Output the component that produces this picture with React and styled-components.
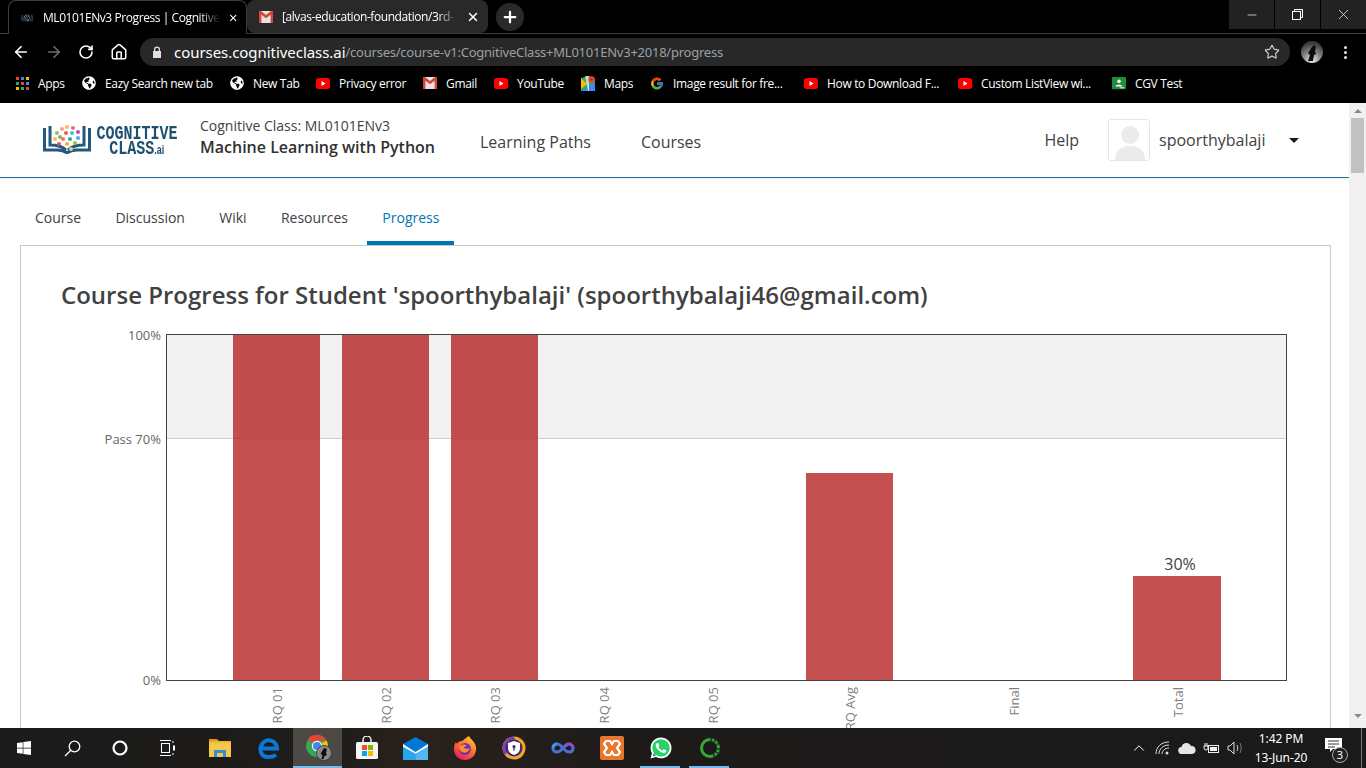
import styled, { createGlobalStyle } from "styled-components";
import { ArrowLeft, ArrowRight, RotateCw, Home, Star, X, Plus, Minus, ChevronUp } from "lucide-react";
import { FaWindows, FaWhatsapp, FaGlobeAmericas } from "react-icons/fa";
import { FcGoogle } from "react-icons/fc";

const GlobalStyle = createGlobalStyle`
  html, body { margin: 0; padding: 0; overflow: hidden; background: #fff; }
  * { box-sizing: border-box; }
`;

const Screen = styled.div`
  width: 1366px;
  height: 768px;
  display: flex;
  flex-direction: column;
  overflow: hidden;
  font-family: "Open Sans", "Noto Sans", sans-serif;
`;

/* browser chrome */
const Browser = styled.div`
  height: 103px;
  flex: none;
  background: #000;
  color: #fff;
`;

const TabStrip = styled.div`
  height: 34px;
  display: flex;
  padding-left: 8px;
  border-bottom: 1px solid #3c3c3c;
`;

const BrowserTab = styled.div`
  width: ${(p) => p.$w}px;
  height: ${(p) => (p.$active ? 34 : 33)}px;
  display: flex;
  align-items: center;
  padding: 0 8px 0 12px;
  gap: 8px;
  font-size: 12px;
  letter-spacing: -0.42px;
  background: ${(p) => (p.$active ? "#000" : "#292929")};
  border-radius: 8px 8px ${(p) => (p.$active ? "0 0" : "8px 8px")};
  border: ${(p) => (p.$active ? "1px solid #3c3c3c" : "none")};
  border-bottom: none;
  position: relative;
  z-index: ${(p) => (p.$active ? 1 : 0)};
`;

const TabTitle = styled.span`
  flex: 1;
  white-space: nowrap;
  margin-left: ${(p) => p.$ml || 0}px;
  -webkit-mask-image: linear-gradient(to right, #000 88%, transparent 100%);
  mask-image: linear-gradient(to right, #000 88%, transparent 100%);
`;

const NewTab = styled.div`
  width: 28px;
  height: 28px;
  margin: 3px 0 0 8px;
  border-radius: 50%;
  background: #292929;
  display: flex;
  align-items: center;
  justify-content: center;
`;

const WindowControls = styled.div`
  margin-left: auto;
  display: flex;
  gap: 1px;
  height: 29px;
`;

const WindowButton = styled.div`
  width: 45px;
  background: #222;
  display: flex;
  align-items: center;
  justify-content: center;
`;

const Toolbar = styled.div`
  height: 36px;
  display: flex;
  align-items: center;
  padding-left: 5px;
`;

const ToolButton = styled.div`
  width: 32.5px;
  display: flex;
  justify-content: center;
  color: ${(p) => (p.$off ? "#6e6e6e" : "#fff")};
`;

const AddressBar = styled.div`
  width: 1150px;
  height: 28px;
  margin-left: 5px;
  padding: 0 10px 0 12px;
  background: #282828;
  border-radius: 14px;
  display: flex;
  align-items: center;
  font-family: "Noto Sans", sans-serif;
`;

const Host = styled.span`
  margin-left: 12px;
  font-size: 15px;
  letter-spacing: -0.05px;
  color: #fff;
`;

const UrlPath = styled.span`
  font-size: 13px;
  letter-spacing: -0.24px;
  color: #9aa0a6;
`;

const StarSlot = styled.div`
  margin-left: auto;
  display: flex;
  color: #c8c8c8;
`;

const Profile = styled.div`
  margin-left: 11px;
  width: 22px;
  height: 22px;
  border-radius: 50%;
  overflow: hidden;
`;

const Kebab = styled.div`
  margin-left: 21px;
  display: flex;
  flex-direction: column;
  gap: 2px;
  span {
    width: 3px;
    height: 3px;
    border-radius: 50%;
    background: #e6e6e6;
  }
`;

const Bookmarks = styled.div`
  height: 33px;
  display: flex;
  align-items: center;
  padding: 0 0 7px 15px;
`;

const Bookmark = styled.div`
  width: ${(p) => p.$w}px;
  flex: none;
  display: flex;
  align-items: center;
  gap: 9px;
  font-size: 12px;
  letter-spacing: -0.33px;
  white-space: nowrap;
`;

const FavSlot = styled.span`
  width: 14px;
  height: 14px;
  flex: none;
  display: flex;
  align-items: center;
  justify-content: center;
`;

/* page */
const Viewport = styled.div`
  flex: 1;
  min-height: 0;
  display: flex;
`;

const Page = styled.div`
  flex: 1;
  min-width: 0;
  overflow: hidden;
  background: #fff;
`;

const Scrollbar = styled.div`
  width: 17px;
  flex: none;
  background: #f1f1f1;
  display: flex;
  flex-direction: column;
  align-items: center;
  padding: 6px 2px;
`;

const ScrollThumb = styled.div`
  width: 13px;
  height: 55px;
  margin-top: 5px;
  background: #c1c1c1;
`;

const ScrollArrow = styled.div`
  width: 0;
  height: 0;
  border-left: 4px solid transparent;
  border-right: 4px solid transparent;
  border-${(p) => (p.$down ? "top" : "bottom")}: 4px solid #8a8a8a;
  margin-top: ${(p) => (p.$down ? "auto" : "0")};
  margin-bottom: ${(p) => (p.$down ? "4px" : "0")};
`;

const Header = styled.header`
  height: 75px;
  display: flex;
  align-items: center;
  padding: 0 50px 0 43px;
  border-bottom: 1px solid #1a6f9e;
  box-shadow: 0 1px 4px rgba(0, 0, 0, 0.08);
`;

const Logo = styled.div`
  width: 157px;
  flex: none;
  display: flex;
  align-items: center;
  gap: 5px;
  margin-top: -2px;
`;

const LogoWords = styled.div`
  width: 82px;
  margin-top: 5px;
  display: flex;
  flex-direction: column;
  align-items: center;
  font-family: "Liberation Mono", monospace;
  font-weight: 700;
  color: #1d4f70;
  line-height: 15px;
`;

const LogoLine = styled.div`
  font-size: 20px;
  white-space: nowrap;
  transform: scaleX(0.75);
`;

const LogoAi = styled.span`
  font-family: "Liberation Sans", sans-serif;
  font-size: 12px;
`;

const CourseTitle = styled.div`
  width: 280px;
  flex: none;
  margin-top: -6px;
  color: #313131;
`;

const CourseOrg = styled.div`
  font-size: 14px;
  line-height: 20px;
  color: #414141;
`;

const CourseName = styled.div`
  font-size: 16px;
  line-height: 22px;
  font-weight: 600;
`;

const HeaderLink = styled.a`
  font-size: 16px;
  color: #414141;
  margin-top: ${(p) => (p.$push ? 0 : 3)}px;
  margin-right: ${(p) => p.$mr || 0}px;
  margin-left: ${(p) => (p.$push ? "auto" : "0")};
`;

const AvatarBox = styled.div`
  width: 42px;
  height: 42px;
  flex: none;
  border: 1px solid #e6e6e6;
  border-radius: 3px;
  overflow: hidden;
`;

const UserName = styled.span`
  font-size: 16px;
  color: #414141;
  margin-left: 9px;
`;

const Caret = styled.span`
  margin-left: auto;
  width: 0;
  height: 0;
  border-left: 5px solid transparent;
  border-right: 5px solid transparent;
  border-top: 5px solid #1b1b1b;
`;

const UserMenu = styled.div`
  width: 191px;
  flex: none;
  display: flex;
  align-items: center;
`;

const CourseNav = styled.nav`
  height: 67px;
  padding: 17px 0 0 20px;
  display: flex;
  gap: 4.3px;
`;

const NavTab = styled.a`
  height: 50px;
  padding: 0 15px 2px;
  display: flex;
  align-items: center;
  font-size: 14px;
  color: ${(p) => (p.$active ? "#0075b4" : "#414141")};
  border-bottom: 4px solid ${(p) => (p.$active ? "#0075b4" : "transparent")};
`;

const Panel = styled.section`
  width: 1311px;
  height: 600px;
  margin-left: 20px;
  padding-top: 33px;
  border: 1px solid #c8c8c8;
`;

const PanelTitle = styled.h1`
  margin: 0 0 9px 40px;
  font-size: 24px;
  line-height: 32px;
  font-weight: 600;
  color: #414141;
  white-space: nowrap;
`;

const ChartSvg = styled.svg`
  display: block;
  font-family: "Open Sans", sans-serif;
`;

/* taskbar */
const Taskbar = styled.div`
  height: 40px;
  flex: none;
  display: flex;
  align-items: stretch;
  background: linear-gradient(to right, #1b1b1b 0%, #1e1c1a 25%, #2a231d 30%, #1d1b1a 45%, #1a1a1a 100%);
  color: #fff;
`;

const Slot = styled.div`
  width: ${(p) => p.$w || 49}px;
  flex: none;
  display: flex;
  align-items: center;
  justify-content: center;
  position: relative;
  background: ${(p) => (p.$active ? "#4c4945" : "transparent")};
  &::after {
    content: "";
    display: ${(p) => (p.$active || p.$running ? "block" : "none")};
    position: absolute;
    bottom: 0;
    left: ${(p) => (p.$running ? 4 : 0)}px;
    right: ${(p) => (p.$running ? 5 : 0)}px;
    height: 2px;
    background: #76b9ed;
  }
`;

const SlotGap = styled.div`
  width: ${(p) => p.$w}px;
  flex: none;
`;

const WhatsappBadge = styled.div`
  width: 24px;
  height: 24px;
  display: flex;
  background: radial-gradient(circle at center, #25d366 0, #25d366 9.5px, transparent 10px);
  color: #fff;
`;

const Tray = styled.div`
  margin-left: auto;
  display: flex;
  align-items: center;
  height: 100%;
`;

const TrayIcon = styled.div`
  width: 24px;
  display: flex;
  justify-content: center;
`;

const Clock = styled.div`
  width: 68px;
  text-align: center;
  font-family: "Noto Sans", sans-serif;
  font-size: 12px;
  line-height: 19px;
  letter-spacing: -0.1px;
`;

const Notify = styled.div`
  width: 46px;
  height: 100%;
  position: relative;
  display: flex;
  align-items: center;
  padding: 0 0 6px 10px;
`;

const NotifyBadge = styled.span`
  position: absolute;
  left: 17px;
  top: 19px;
  width: 16px;
  height: 16px;
  border-radius: 50%;
  background: #222;
  border: 1px solid #aaa;
  font-family: "Noto Sans", sans-serif;
  font-size: 11px;
  line-height: 14px;
  text-align: center;
`;

const ShowDesktop = styled.div`
  width: 1px;
  height: 100%;
  margin-right: 4px;
  background: #777;
`;

const logoDots = [
  [14, 9, "#8bc34a"], [19, 5, "#ef9a9a"], [24, 3, "#ffb74d"], [30, 4, "#f06292"], [35, 8, "#ab47bc"],
  [17, 13, "#66bb6a"], [23, 9, "#ef5350"], [29, 9, "#26c6da"], [35, 14, "#42a5f5"],
  [12, 15, "#ffb74d"], [20, 15, "#ff7043"], [27, 15, "#26a69a"], [32, 19, "#8bc34a"],
  [16, 20, "#ec407a"], [24, 20, "#ffa726"], [28, 25, "#ffcc80"],
];

const BookIcon = ({ size = 16 }) => (
  <svg width={size} height={size * 0.625} viewBox="0 0 48 30" fill="none" stroke="#22597d">
    <path d="M1.500 4v22h13c4 0 7 1 9.500 3 2.500-2 5.500-3 9.500-3h13V4" strokeWidth="3" />
    <path d="M7 2v19c6 0 12 1 16 5M41 2v19c-6 0-12 1-16 5" strokeWidth="3" />
    {logoDots.map(([cx, cy, fill]) => (
      <rect key={`${cx}-${cy}`} x={cx - 1.8} y={cy - 1.8} width="3.600" height="3.600" rx="1" fill={fill} stroke="none" />
    ))}
  </svg>
);

const GmailIcon = () => (
  <svg width="14" height="12" viewBox="0 0 14 12">
    <rect width="14" height="12" fill="#e8e3e3" />
    <path d="M0 0h2l5 4 5-4h2v12h-2.400V3.800L7 7.200 2.400 3.800V12H0z" fill="#d44638" />
  </svg>
);

const YoutubeIcon = () => (
  <svg width="14" height="11" viewBox="0 0 14 11">
    <rect width="14" height="11" rx="2.500" fill="#f00" />
    <path d="M5.500 3l4 2.500-4 2.500z" fill="#fff" />
  </svg>
);

const AppsIcon = () => {
  const colors = ["#ea4335", "#4285f4", "#fbbc05", "#34a853", "#ea4335", "#4285f4", "#fbbc05", "#34a853", "#ea4335"];
  return (
    <svg width="13" height="13" viewBox="0 0 13 13">
      {colors.map((c, i) => (
        <rect key={i} x={(i % 3) * 5} y={Math.floor(i / 3) * 5} width="3" height="3" fill={c} />
      ))}
    </svg>
  );
};

const MapsIcon = () => (
  <svg width="14" height="15" viewBox="0 0 14 15">
    <path d="M0 2l8-2 6 3v12H0z" fill="#34a853" />
    <path d="M0 15l14-9v9z" fill="#4285f4" />
    <path d="M0 2l6 6-6 5z" fill="#fbbc05" />
    <path d="M4 0h4v15H7z" fill="#e8eaed" opacity="0.8" />
    <circle cx="10.500" cy="3.500" r="3.200" fill="#ea4335" />
    <circle cx="10.500" cy="3.500" r="1.100" fill="#8f2a20" />
  </svg>
);

const ClassroomIcon = () => (
  <svg width="16" height="14" viewBox="0 0 16 14">
    <rect width="16" height="14" rx="1" fill="#1e8e3e" />
    <circle cx="8" cy="5" r="2" fill="#fff" />
    <path d="M4 11c0-2.500 8-2.500 8 0z" fill="#fff" />
    <rect x="9" y="12" width="5" height="1" fill="#fff" />
  </svg>
);

const ChromeIcon = () => (
  <svg width="29" height="26" viewBox="-3 0 29 26">
    <circle cx="11" cy="11" r="11" fill="#34a853" />
    <path d="M11 0a11 11 0 0 1 9.500 5.500H11a5.500 5.500 0 0 0-5 3.200L2 3.500A11 11 0 0 1 11 0z" fill="#ea4335" />
    <path d="M20.500 5.500A11 11 0 0 1 11 22l4.500-7.800A5.500 5.500 0 0 0 15.600 8z" fill="#fbbc05" />
    <circle cx="11" cy="11" r="5.200" fill="#fff" />
    <circle cx="11" cy="11" r="4.100" fill="#4285f4" />
    <circle cx="18" cy="18" r="7.500" fill="#8a8a8a" />
    <circle cx="18" cy="18" r="7.500" fill="none" stroke="#333" strokeWidth="0.800" />
    <path d="M15.500 24l1-4-2-1 3.500-6 3 1-1 4 1 2-2.500 1-1 3z" fill="#0c0c0c" />
  </svg>
);

const EdgeIcon = () => (
  <svg width="22" height="22" viewBox="0 0 22 22" fill="none" stroke="#0a78d7">
    <path d="M4 11.500h15a8 8 0 0 0-15.500-3" strokeWidth="4" />
    <path d="M3.500 8C1 13 3 20 10 20c3 0 6-.8 8-2.200" strokeWidth="4" />
  </svg>
);

const ProfileImage = () => (
  <svg width="22" height="22" viewBox="0 0 22 22">
    <defs>
      <radialGradient id="prof" cx="0.5" cy="0.9" r="0.8">
        <stop offset="0" stopColor="#f0f0f0" />
        <stop offset="0.5" stopColor="#8a8a8a" />
        <stop offset="1" stopColor="#3a3a3a" />
      </radialGradient>
    </defs>
    <rect width="22" height="22" fill="url(#prof)" />
    <path d="M7 20l2-6-2-2 4-6 2-2 2 2-1 4 1 3-2 1-1 6z" fill="#0c0c0c" />
  </svg>
);

const AvatarImage = () => (
  <svg width="40" height="40" viewBox="0 0 40 40">
    <rect width="40" height="40" fill="#fff" />
    <circle cx="21" cy="15" r="9" fill="#ebebeb" />
    <path d="M6 40c0-10 7-14 15-14s15 4 15 14z" fill="#ebebeb" />
  </svg>
);

const ExplorerIcon = () => (
  <svg width="22" height="18" viewBox="0 0 22 18">
    <path d="M0 0h8l2 2h-10z" fill="#d99a1c" />
    <rect y="2" width="22" height="16" fill="#f6c945" />
    <rect y="2" width="22" height="2" fill="#e8b93a" />
    <path d="M5 18v-7h12v7h-3v-4H8v4z" fill="#2f8fd8" />
  </svg>
);

const StoreIcon = () => (
  <svg width="24" height="24" viewBox="0 0 24 24">
    <path d="M8 7V4a4 4 0 0 1 8 0v3" fill="none" stroke="#eee" strokeWidth="1.500" />
    <rect x="1" y="6" width="22" height="17" rx="1.500" fill="#f5f5f5" />
    <rect x="7" y="9" width="5" height="5" fill="#f25022" />
    <rect x="13" y="9" width="5" height="5" fill="#7fba00" />
    <rect x="7" y="15" width="5" height="5" fill="#00a4ef" />
    <rect x="13" y="15" width="5" height="5" fill="#ffb900" />
  </svg>
);

const MailIcon = () => (
  <svg width="25" height="23" viewBox="0 0 25 23">
    <path d="M12.500 0L25 7v16H0V7z" fill="#0078d4" />
    <path d="M0 7l12.500 8L25 7v3L12.500 17 0 10z" fill="#f2f9ff" />
    <path d="M0 10l12.500 7v6H0z" fill="#28a8ea" />
    <path d="M25 10l-12.500 7v6H25z" fill="#50b8f0" />
  </svg>
);

const FirefoxIcon = () => (
  <svg width="24" height="24" viewBox="0 0 24 24">
    <defs>
      <linearGradient id="fx" x1="0.800" y1="0" x2="0.200" y2="1">
        <stop offset="0" stopColor="#ffcb30" />
        <stop offset="0.500" stopColor="#ff6a2b" />
        <stop offset="1" stopColor="#e3176d" />
      </linearGradient>
    </defs>
    <path d="M16 0c1 3 6 5 7 11 1 7-4 13-11 13S0 18 1 11c.3-2 1-4 2-5l1 2c1-2 3-3 5-3 1 0 3-3 7-5z" fill="url(#fx)" />
    <circle cx="12" cy="13" r="6" fill="#6b2fb3" />
    <path d="M6 11c2-3 6-3 8-1-2 0-3 1-3 2 2 1 5 1 6 0-1 4-5 6-8 4-2-1-3-3-3-5z" fill="#ff8a2b" />
  </svg>
);

const AvastIcon = () => (
  <svg width="24" height="24" viewBox="0 0 24 24">
    <circle cx="12" cy="12" r="11.500" fill="#f5a623" />
    <path d="M12 .5A11.500 11.500 0 0 0 3 19L14 6z" fill="#7b3fb5" />
    <circle cx="12" cy="12" r="8.500" fill="#3e2a78" />
    <path d="M12 5l6 2v5c0 4-3 6-6 7-3-1-6-3-6-7V7z" fill="#fff" />
    <circle cx="12" cy="10.500" r="1.500" fill="#3e2a78" />
    <rect x="11.300" y="11" width="1.400" height="3.500" fill="#3e2a78" />
  </svg>
);

const InfinityIcon = () => (
  <svg width="24" height="12" viewBox="0 0 24 12">
    <path d="M6 2c3 0 4 2 6 4s3 4 6 4 4-2 4-4-2-4-4-4-4 2-6 4-3 4-6 4-4-2-4-4 1-4 4-4z" fill="none" stroke="#4a6fd8" strokeWidth="3" />
    <path d="M14 4c1-1 2-2 4-2s4 2 4 4" fill="none" stroke="#8a4fc7" strokeWidth="3" />
    <path d="M2 6c0-2 2-4 4-4" fill="none" stroke="#2ea3dd" strokeWidth="3" />
  </svg>
);

const XamppIcon = () => (
  <svg width="24" height="24" viewBox="0 0 24 24">
    <rect width="24" height="24" rx="2" fill="#e8762c" />
    <path d="M6 5h4l2 3 2-3h4l2 3-3 4 3 4-2 3h-4l-2-3-2 3H6l-2-3 3-4-3-4z" fill="none" stroke="#fff" strokeWidth="2.200" />
  </svg>
);

const SpinnerIcon = () => (
  <svg width="22" height="22" viewBox="0 0 22 22">
    <circle cx="11" cy="11" r="8.500" fill="none" stroke="#3fa535" strokeWidth="3" />
    <circle cx="11" cy="11" r="8.500" fill="none" stroke="#0f4a2a" strokeWidth="3" strokeDasharray="2 2 2 2 2 30" />
  </svg>
);

const WifiIcon = () => (
  <svg width="16" height="14" viewBox="0 0 16 14" fill="none" stroke="#ddd" strokeWidth="1">
    <path d="M1 13C1 6 6 1 14 1M4 13C4 8 8 4 14 4M7 13c0-3 3-6 7-6" />
    <circle cx="12" cy="12" r="1.500" fill="#ddd" stroke="none" />
  </svg>
);

const CloudIcon = () => (
  <svg width="18" height="11" viewBox="0 0 18 11">
    <path d="M4 11a3.500 3.500 0 0 1-.5-7A5 5 0 0 1 13 3a4 4 0 0 1 1 8z" fill="#e6e6e6" />
  </svg>
);

const BatteryIcon = () => (
  <svg width="17" height="12" viewBox="0 0 17 12" fill="none" stroke="#eee">
    <rect x="5.500" y="3.500" width="10" height="7" />
    <rect x="7" y="5" width="7" height="4" fill="#eee" stroke="none" />
    <path d="M1 4h4v2a2 2 0 0 1-4 0zM2 1v3M4 1v3" />
  </svg>
);

const SpeakerIcon = () => (
  <svg width="17" height="14" viewBox="0 0 17 14" fill="none" stroke="#ddd">
    <path d="M1 5h2l4-4v12l-4-4H1z" />
    <path d="M10 4c1 2 1 4 0 6" />
    <path d="M13 2c1.500 3 1.500 7 0 10" stroke="#777" />
  </svg>
);

const TaskViewIcon = () => (
  <svg width="16" height="16" viewBox="0 0 16 16" fill="none" stroke="#fff">
    <path d="M0 .5h11M0 15.500h11M13 1v2M13 13v2" />
    <rect x="1.500" y="3.500" width="8" height="9" />
    <rect x="13" y="5.500" width="2" height="5" fill="#fff" stroke="none" />
  </svg>
);

const SearchIcon = () => (
  <svg width="17" height="17" viewBox="0 0 17 17" fill="none" stroke="#fff" strokeWidth="1.300">
    <circle cx="10.500" cy="6.500" r="5.300" />
    <path d="M6.800 10.200L1 16" />
  </svg>
);

const NotifyIcon = () => (
  <svg width="17" height="14" viewBox="0 0 17 14">
    <path d="M0 0h17v11H8l-3 3v-3H0z" fill="#fff" />
    <path d="M3 3h11M3 6h11M3 9h7" stroke="#333" />
  </svg>
);

const bookmarks = [
  { w: 67, icon: <AppsIcon />, label: "Apps" },
  { w: 148, icon: <FaGlobeAmericas size={14} color="#fff" />, label: "Eazy Search new tab" },
  { w: 86, icon: <FaGlobeAmericas size={14} color="#fff" />, label: "New Tab" },
  { w: 107, icon: <YoutubeIcon />, label: "Privacy error" },
  { w: 71, icon: <GmailIcon />, label: "Gmail" },
  { w: 87, icon: <YoutubeIcon />, label: "YouTube" },
  { w: 69, icon: <MapsIcon />, label: "Maps" },
  { w: 154, icon: <FcGoogle size={15} />, label: "Image result for fre..." },
  { w: 154, icon: <YoutubeIcon />, label: "How to Download F..." },
  { w: 154, icon: <YoutubeIcon />, label: "Custom ListView wi..." },
  { w: 90, icon: <ClassroomIcon />, label: "CGV Test" },
];

const navTabs = ["Course", "Discussion", "Wiki", "Resources", "Progress"];

const bars = [
  { x: 233, w: 87, top: 334 },
  { x: 342, w: 87, top: 334 },
  { x: 451, w: 87, top: 334 },
  { x: 806, w: 87, top: 473 },
  { x: 1133, w: 88, top: 576 },
];

const xLabels = [
  ["RQ 01", 277], ["RQ 02", 386], ["RQ 03", 495], ["RQ 04", 604],
  ["RQ 05", 713], ["RQ Avg", 850], ["Final", 1014], ["Total", 1178],
];

const yLabels = [
  ["100%", 340], ["Pass 70%", 444], ["0%", 685],
];

// viewBox is in page coordinates so the numbers read straight off the screenshot
const ProgressChart = () => (
  <ChartSvg width="1309" height="420" viewBox="21 320 1309 420">
    <rect x="166" y="334" width="1121" height="104" fill="#f2f2f2" />
    <line x1="166" x2="1287" y1="438.500" y2="438.500" stroke="#ccc" />
    {bars.map((b) => (
      <rect key={b.x} x={b.x} y={b.top} width={b.w} height={680 - b.top} fill="#b83030" opacity="0.85" />
    ))}
    <rect x="166.500" y="334.500" width="1120" height="346" fill="none" stroke="#444" />
    {yLabels.map(([text, y]) => (
      <text key={text} x="161" y={y} textAnchor="end" fontSize="13" fill="#666">{text}</text>
    ))}
    {xLabels.map(([text, x]) => (
      <text key={text} transform={`translate(${x + 4.5} 687) rotate(-90)`} textAnchor="end" fontSize="13" fill="#808080">{text}</text>
    ))}
    <text x="1180" y="570" textAnchor="middle" fontSize="16" fill="#414141">30%</text>
  </ChartSvg>
);

export default function App() {
  return (
    <Screen>
      <GlobalStyle />
      <Browser>
        <TabStrip>
          <BrowserTab $active $w={239}>
            <BookIcon />
            <TabTitle $ml={2}>ML0101ENv3 Progress | Cognitive</TabTitle>
            <X size={14} strokeWidth={2.5} />
          </BrowserTab>
          <BrowserTab $w={241}>
            <GmailIcon />
            <TabTitle $ml={1}>[alvas-education-foundation/3rd-</TabTitle>
            <X size={14} strokeWidth={2.5} />
          </BrowserTab>
          <NewTab><Plus size={18} strokeWidth={3} /></NewTab>
          <WindowControls>
            <WindowButton><Minus size={14} strokeWidth={1.2} /></WindowButton>
            <WindowButton>
              <svg width="11" height="11" viewBox="0 0 11 11" fill="none" stroke="#fff">
                <rect x="0.500" y="2.500" width="8" height="8" />
                <path d="M2.500 2.500v-2h8v8h-2" />
              </svg>
            </WindowButton>
            <WindowButton><X size={17} strokeWidth={1} /></WindowButton>
          </WindowControls>
        </TabStrip>
        <Toolbar>
          <ToolButton><ArrowLeft size={18} strokeWidth={2.2} /></ToolButton>
          <ToolButton $off><ArrowRight size={18} strokeWidth={2.2} /></ToolButton>
          <ToolButton><RotateCw size={16} strokeWidth={2.4} /></ToolButton>
          <ToolButton><Home size={18} strokeWidth={2} /></ToolButton>
          <AddressBar>
            <svg width="10" height="12" viewBox="0 0 10 12">
              <path d="M2 5V3.500a3 3 0 0 1 6 0V5h1v7H1V5zm1.300 0h3.400V3.500a1.700 1.700 0 0 0-3.400 0z" fill="#e0e0e0" />
            </svg>
            <Host>courses.cognitiveclass.ai</Host>
            <UrlPath>/courses/course-v1:CognitiveClass+ML0101ENv3+2018/progress</UrlPath>
            <StarSlot><Star size={16} strokeWidth={1.8} /></StarSlot>
          </AddressBar>
          <Profile><ProfileImage /></Profile>
          <Kebab><span /><span /><span /></Kebab>
        </Toolbar>
        <Bookmarks>
          {bookmarks.map((b) => (
            <Bookmark key={b.label} $w={b.w}>
              <FavSlot>{b.icon}</FavSlot>
              {b.label}
            </Bookmark>
          ))}
        </Bookmarks>
      </Browser>

      <Viewport>
        <Page>
          <Header>
            <Logo>
              <BookIcon size={48} />
              <LogoWords>
                <LogoLine>COGNITIVE</LogoLine>
                <LogoLine>CLASS<LogoAi>.ai</LogoAi></LogoLine>
              </LogoWords>
            </Logo>
            <CourseTitle>
              <CourseOrg>Cognitive Class: ML0101ENv3</CourseOrg>
              <CourseName>Machine Learning with Python</CourseName>
            </CourseTitle>
            <HeaderLink $mr={50}>Learning Paths</HeaderLink>
            <HeaderLink>Courses</HeaderLink>
            <HeaderLink $push $mr={29}>Help</HeaderLink>
            <UserMenu>
              <AvatarBox><AvatarImage /></AvatarBox>
              <UserName>spoorthybalaji</UserName>
              <Caret />
            </UserMenu>
          </Header>
          <CourseNav>
            {navTabs.map((t) => (
              <NavTab key={t} $active={t === "Progress"}>{t}</NavTab>
            ))}
          </CourseNav>
          <Panel>
            <PanelTitle>Course Progress for Student 'spoorthybalaji' (spoorthybalaji46@gmail.com)</PanelTitle>
            <ProgressChart />
          </Panel>
        </Page>
        <Scrollbar>
          <ScrollArrow />
          <ScrollThumb />
          <ScrollArrow $down />
        </Scrollbar>
      </Viewport>

      <Taskbar>
        <Slot $w={48}><FaWindows size={16} /></Slot>
        <Slot $w={48}><SearchIcon /></Slot>
        <Slot $w={48}>
          <svg width="16" height="16" viewBox="0 0 16 16" fill="none" stroke="#fff" strokeWidth="2.200">
            <circle cx="8" cy="8" r="6.500" />
          </svg>
        </Slot>
        <Slot $w={48}><TaskViewIcon /></Slot>
        <SlotGap $w={3} />
        <Slot><ExplorerIcon /></Slot>
        <Slot><EdgeIcon /></Slot>
        <Slot $active><ChromeIcon /></Slot>
        <Slot><StoreIcon /></Slot>
        <Slot><MailIcon /></Slot>
        <Slot><FirefoxIcon /></Slot>
        <Slot><AvastIcon /></Slot>
        <Slot><InfinityIcon /></Slot>
        <Slot><XamppIcon /></Slot>
        <Slot $running><WhatsappBadge><FaWhatsapp size={24} /></WhatsappBadge></Slot>
        <Slot $running><SpinnerIcon /></Slot>
        <Tray>
          <TrayIcon><ChevronUp size={18} strokeWidth={1.3} /></TrayIcon>
          <TrayIcon><WifiIcon /></TrayIcon>
          <TrayIcon><CloudIcon /></TrayIcon>
          <TrayIcon><BatteryIcon /></TrayIcon>
          <TrayIcon><SpeakerIcon /></TrayIcon>
          <Clock>1:42 PM<br />13-Jun-20</Clock>
          <Notify>
            <NotifyIcon />
            <NotifyBadge>3</NotifyBadge>
          </Notify>
          <ShowDesktop />
        </Tray>
      </Taskbar>
    </Screen>
  );
}
